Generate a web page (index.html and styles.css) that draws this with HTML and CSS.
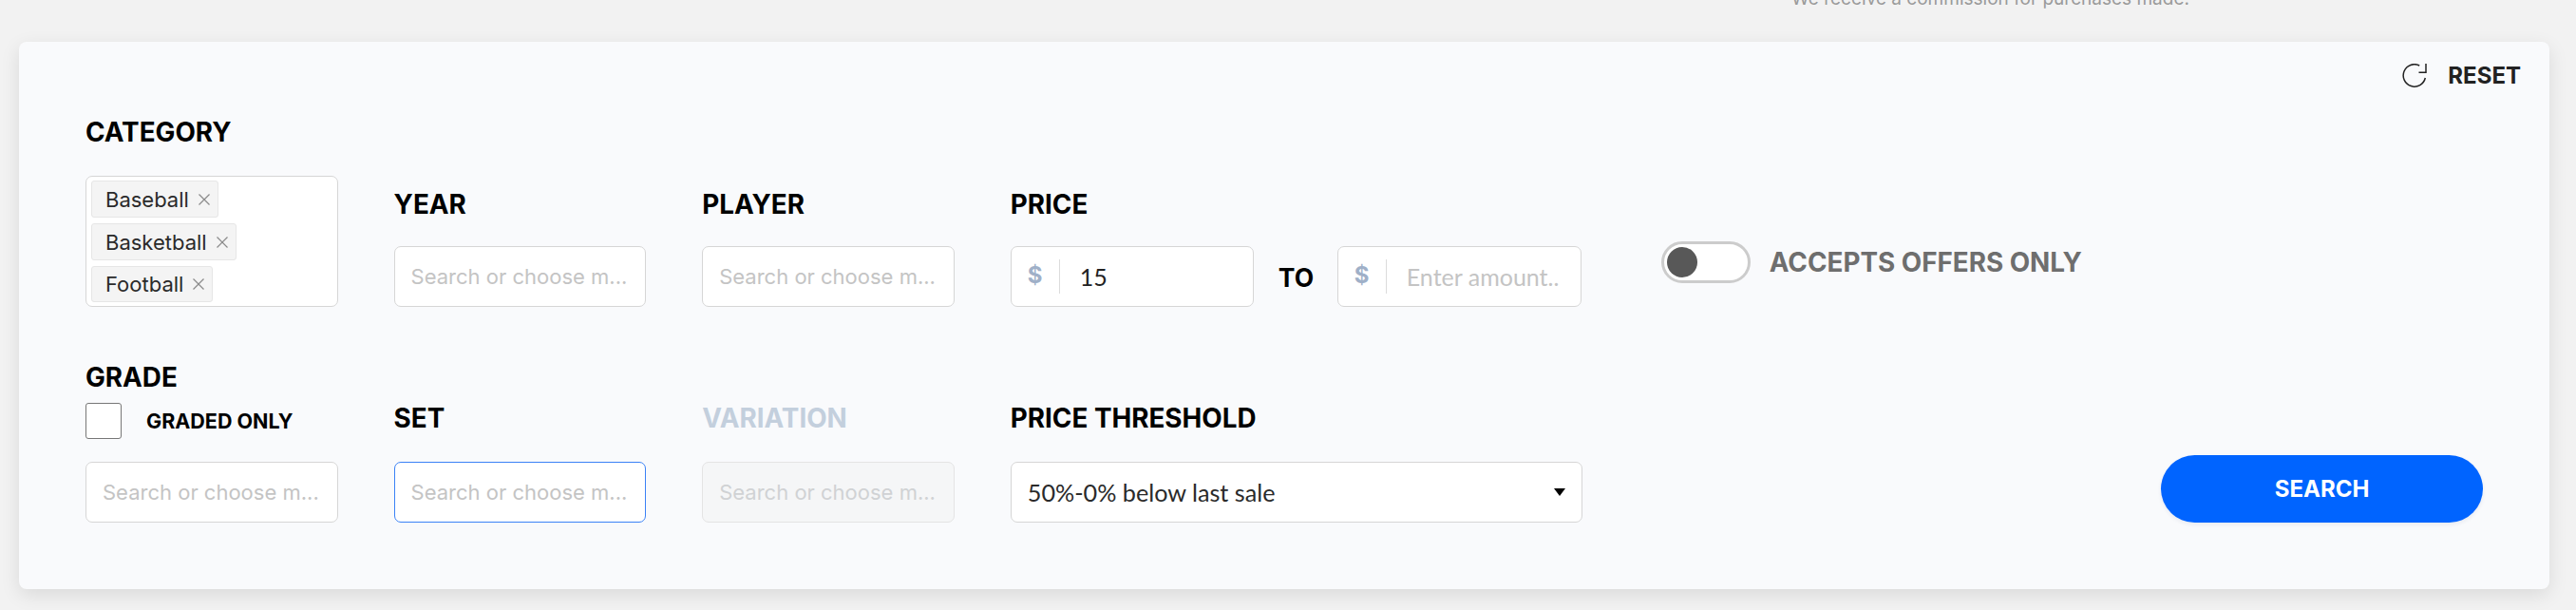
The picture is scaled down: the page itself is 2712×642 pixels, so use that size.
FILE: index.html
```html
<!DOCTYPE html>
<html lang="en">
<head>
<meta charset="utf-8">
<title>Search filters</title>
<link rel="stylesheet" href="styles.css">
</head>
<body>
<p class="disclosure">We receive a commission for purchases made.</p>
<form class="card">
  <div class="reset-row">
    <button type="button" class="reset">
      <svg class="reset-icon" viewBox="0 0 26 26" width="26" height="26" aria-hidden="true">
        <path d="M18.2 2A11.7 11.7 0 1 0 24.3 15" fill="none" stroke="#222" stroke-width="1.5"/>
        <path d="M25 0V9.2H17.5" fill="none" stroke="#222" stroke-width="1.5"/>
      </svg>
      <span>RESET</span>
    </button>
  </div>
  <div class="row row-one">
    <div class="field">
      <div class="label category-label">CATEGORY</div>
      <div class="box tags">
        <span class="tag">Baseball<svg class="x" viewBox="0 0 12 12" width="12" height="12" aria-hidden="true"><path d="M.5.5l11 11M11.5.5l-11 11"/></svg></span>
        <span class="tag">Basketball<svg class="x" viewBox="0 0 12 12" width="12" height="12" aria-hidden="true"><path d="M.5.5l11 11M11.5.5l-11 11"/></svg></span>
        <span class="tag">Football<svg class="x" viewBox="0 0 12 12" width="12" height="12" aria-hidden="true"><path d="M.5.5l11 11M11.5.5l-11 11"/></svg></span>
      </div>
    </div>
    <div class="field">
      <div class="label">YEAR</div>
      <div class="box"><span class="ph">Search or choose m...</span></div>
    </div>
    <div class="field">
      <div class="label">PLAYER</div>
      <div class="box"><span class="ph">Search or choose m...</span></div>
    </div>
    <div class="field price-field">
      <div class="label">PRICE</div>
      <div class="price-row">
        <div class="box money"><span class="dollar">$</span><span class="value">15</span></div>
        <span class="to">TO</span>
        <div class="box money"><span class="dollar">$</span><span class="value empty">Enter amount..</span></div>
      </div>
    </div>
    <div class="offers">
      <span class="toggle"><span class="knob"></span></span>
      <span class="offers-label">ACCEPTS OFFERS ONLY</span>
    </div>
  </div>
  <div class="row row-two">
    <div class="field">
      <div class="label grade-label">GRADE</div>
      <div class="graded">
        <span class="check"></span>
        <span class="graded-label">GRADED ONLY</span>
      </div>
      <div class="box"><span class="ph">Search or choose m...</span></div>
    </div>
    <div class="field">
      <div class="label">SET</div>
      <div class="box focus"><span class="ph">Search or choose m...</span></div>
    </div>
    <div class="field">
      <div class="label disabled-label">VARIATION</div>
      <div class="box disabled"><span class="ph">Search or choose m...</span></div>
    </div>
    <div class="field price-field">
      <div class="label">PRICE THRESHOLD</div>
      <div class="box select"><span>50%-0% below last sale</span><svg class="caret" viewBox="0 0 12 8" width="12" height="8" aria-hidden="true"><path d="M0 0H12L6 8Z"/></svg></div>
    </div>
    <button type="button" class="search">SEARCH</button>
  </div>
</form>
</body>
</html>
```
FILE: styles.css
```css
* { box-sizing: border-box; }
html, body { margin: 0; padding: 0; }
body {
  width: 2712px;
  height: 642px;
  overflow: hidden;
  background: #f2f2f2;
  font-family: "Inter", sans-serif;
  padding: 0 28px 0 20px;
}
.disclosure {
  margin: -14px 0 0;
  height: 58px;
  padding-left: 1866px;
  font: 19px/26px "Inter", sans-serif;
  color: #9a9a9a;
  white-space: nowrap;
}
.card {
  height: 576px;
  background: #f9fafc;
  border-radius: 8px;
  box-shadow: 0 6px 20px rgba(0, 0, 0, .1);
  padding: 23px 30px 70px 70px;
  display: flex;
  flex-direction: column;
}
.reset-row { display: flex; justify-content: flex-end; height: 26px; }
.reset {
  display: flex;
  align-items: center;
  gap: 22px;
  padding: 0;
  border: 0;
  background: none;
  font: 700 24px/26px "Inter", sans-serif;
  color: #222;
}
.row { display: flex; gap: 59px; align-items: flex-end; }
.row-one { margin-top: 29px; }
.row-two { margin-top: 50px; height: 179px; }
.field { width: 265.6px; display: flex; flex-direction: column; }
.price-field { width: 602px; }
.label {
  font: 700 27.8px/32px "Inter", sans-serif;
  color: #000;
  margin-bottom: 28px;
  padding-top: 1px;
}
.category-label { margin-bottom: 30px; }
.row-two .label { margin-bottom: 30px; }
.row-two .grade-label { margin-bottom: 10px; padding-top: 0; }
.disabled-label { color: #c3cfdd; }
.box {
  height: 64px;
  background: #fff;
  border: 1px solid #d6d6d6;
  border-radius: 7px;
  display: flex;
  align-items: center;
  padding: 0 17px;
  font: 22px/30px "Inter", sans-serif;
  white-space: nowrap;
}
.ph { color: #c4c4c4; }
.focus { border-color: #3b82f6; }
.disabled { background: #f5f6f7; border-color: #e4e4e4; }
.disabled .ph { color: #d0d2d4; }
.tags {
  height: 138px;
  padding: 4px 5px;
  flex-direction: column;
  align-items: flex-start;
  gap: 6px;
}
.tag {
  height: 39px;
  background: #f4f4f4;
  border: 1px solid #e6e6e6;
  border-radius: 3px;
  padding: 0 8px 0 14px;
  display: flex;
  align-items: center;
  gap: 10px;
  font-size: 22px;
  color: #2a2a2a;
}
.tag:last-child { height: 38px; }
.x { fill: none; stroke: #8a8a8a; stroke-width: 1.2; }
.price-row { display: flex; align-items: center; }
.money { width: 256px; padding: 0 0 0 17px; font-family: "Lato", sans-serif; }
.money + .to + .money { width: 257px; }
.dollar {
  width: 34px;
  height: 36px;
  border-right: 1px solid #dcdcdc;
  color: #9fb0c8;
  font: 700 24px/34px "Inter", sans-serif;
  flex: none;
}
.value { padding-left: 21px; color: #222; font-size: 25px; }
.value.empty { color: #c4c4c4; }
.to {
  width: 88px;
  padding: 2px 0 0 26px;
  font: 700 26.5px/32px "Inter", sans-serif;
  color: #000;
}
.select {
  justify-content: space-between;
  padding-right: 17px;
  font: 25.2px/30px "Lato", sans-serif;
  color: #2a2a2a;
}
.caret { fill: #000; }
.offers {
  display: flex;
  align-items: center;
  gap: 20px;
  margin-left: 24px;
  margin-bottom: 25px;
}
.toggle {
  width: 94px;
  height: 44px;
  border: 3px solid #ccc;
  border-radius: 22px;
  background: #fff;
  display: flex;
  align-items: center;
  padding-left: 3px;
}
.knob { width: 32px; height: 32px; border-radius: 50%; background: #585858; }
.offers-label {
  font: 700 27.8px/32px "Inter", sans-serif;
  color: #6e6e6e;
  white-space: nowrap;
}
.graded { display: flex; align-items: center; gap: 26px; height: 40px; margin-bottom: 23px; }
.check {
  width: 38px;
  height: 38px;
  background: #fff;
  border: 1px solid #777;
  border-radius: 3px;
}
.graded-label { font: 700 21.5px/26px "Inter", sans-serif; color: #000; }
.search {
  width: 339px;
  height: 71px;
  margin-left: auto;
  margin-right: 40px;
  background: #0064ff;
  color: #fff;
  border: 0;
  border-radius: 36px;
  font: 700 24px/30px "Inter", sans-serif;
  box-shadow: 0 2px 4px rgba(0, 40, 120, .08);
}
```
